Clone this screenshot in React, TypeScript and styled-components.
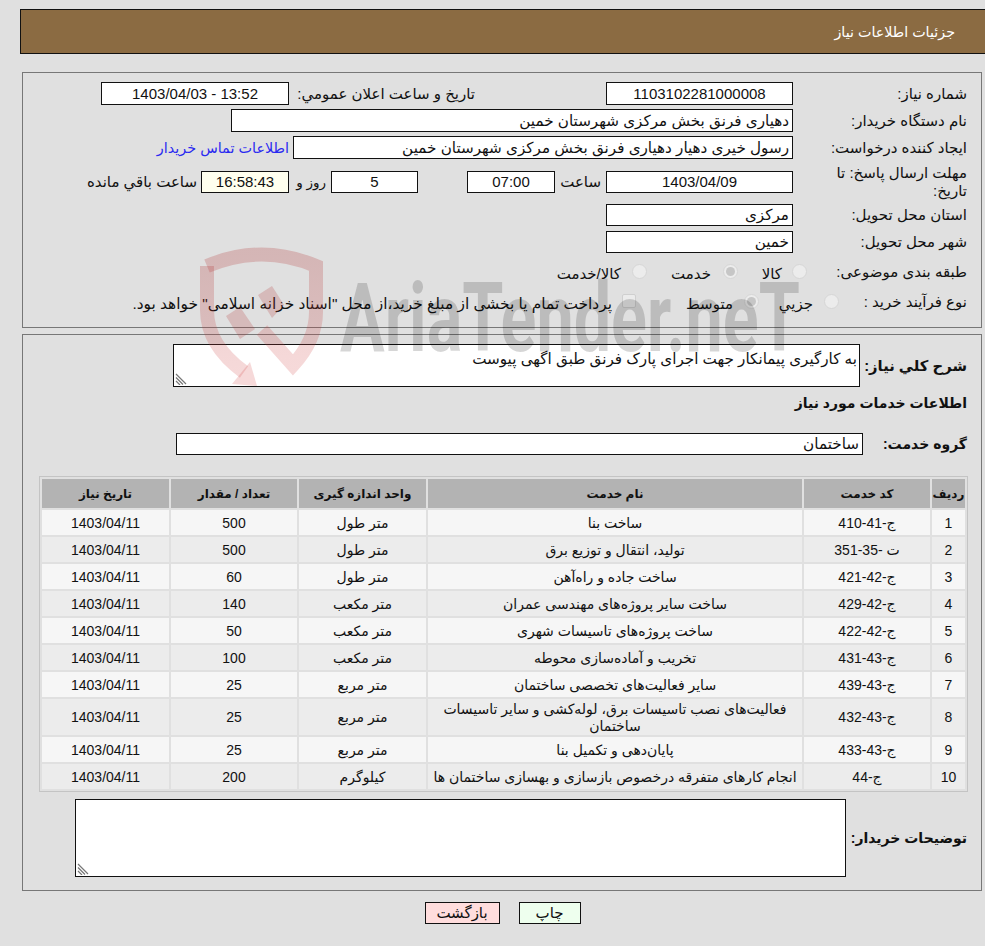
import React from 'react';
import styled, { createGlobalStyle } from 'styled-components';

const Global = createGlobalStyle`
  html, body { margin: 0; padding: 0; background: #e0e0e0; }
  body { font-family: "Liberation Sans", "DejaVu Sans", sans-serif; color: #111; }
`;
const Page = styled.div`
  position: relative; width: 985px; height: 946px; box-sizing: border-box; overflow: hidden;
  padding: 9px 0 0 20px; direction: rtl; font-size: 15px;
`;
const Header = styled.div`
  height: 45px; box-sizing: border-box; background: #8b6b42; border: 1px solid #111; border-right: 0; color: #fff;
  display: flex; align-items: center; padding: 0 30px 0 0; font-size: 14.3px; margin-bottom: 18px;
`;
const Panel = styled.div`
  border: 1px solid #777; margin: 0 3px 0 2px; box-sizing: border-box; display: flex; flex-direction: column;
`;
const TopPanel = styled(Panel)`height: 256px; padding: 7px 14px 0 0; margin-bottom: 6px;`;
const BottomPanel = styled(Panel)`height: 557px; padding: 9px 14px 0 0;`;
const Row = styled.div<{ $h: number; $mt?: number }>`
  display: flex; align-items: center; height: ${p => p.$h}px; margin-top: ${p => p.$mt ?? 0}px; flex: none;
`;
const Label = styled.div`width: 174px; flex: none; line-height: 18px; padding-left: 30px; box-sizing: border-box;`;
const Field = styled.div<{ $w: number; $bg?: string; $center?: boolean; $h?: number; $mr?: number }>`
  width: ${p => p.$w}px; height: ${p => p.$h ?? 23}px; box-sizing: border-box; border: 1px solid #111; background: ${p => p.$bg ?? '#fff'};
  display: flex; align-items: center; flex: none; padding: 0 3px; overflow: hidden; white-space: nowrap;
  margin-right: ${p => p.$mr ?? 0}px; font-size: ${p => p.$center ? 15 : 15.2}px;
  justify-content: ${p => p.$center ? 'center' : 'flex-start'};
`;
const Text = styled.span<{ $mr?: number; $w?: number; $color?: string; $size?: number; $pt?: number }>`
  display: inline-block; flex: none; box-sizing: border-box;
  padding-right: ${p => p.$mr ?? 0}px; padding-top: ${p => p.$pt ?? 0}px; ${p => p.$w ? `width: ${p.$w}px;` : ''}
  color: ${p => p.$color ?? 'inherit'}; white-space: nowrap; font-size: ${p => p.$size ?? 15}px;
`;
const Radio = styled.span<{ $on?: boolean; $mr: number }>`
  width: 15px; height: 15px; border-radius: 50%; background: #ececec; border: 1px solid #d6d6d6; box-sizing: border-box; flex: none;
  display: inline-flex; align-items: center; justify-content: center; margin-right: ${p => p.$mr}px; margin-left: -1px; margin-top: -2px;
  &::after { content: ''; width: 9px; height: 9px; border-radius: 50%; background: ${p => p.$on ? '#c6c6c6' : 'transparent'}; }
`;
const Check = styled.span<{ $mr: number }>`
  width: 14px; height: 14px; border-radius: 2px; background: #ebebeb; border: 1px solid #cfcfcf; box-sizing: border-box; flex: none;
  margin-right: ${p => p.$mr}px; margin-top: -2px;
`;
const BoldLabel = styled.div<{ $w?: number; $size?: number }>`
  font-weight: 700; font-size: ${p => p.$size ?? 14}px; flex: none; white-space: nowrap; ${p => p.$w ? `width: ${p.$w}px;` : ''}
`;
const Area = styled.div<{ $w: number; $h: number }>`
  position: relative; width: ${p => p.$w}px; height: ${p => p.$h}px; box-sizing: border-box; border: 1px solid #111; background: #fff; flex: none; padding: 5px 2px;
  white-space: nowrap; font-size: 15.2px; line-height: 17px;
`;
const Grip = styled.svg`position: absolute; left: 1px; bottom: 1px;`;
const TableWrap = styled.div`margin: 21px -1px 0 0; width: 929px; box-sizing: border-box; border: 1px solid #c4c4c4; flex: none;`;
const T = styled.table`width: 927px; border-collapse: separate; border-spacing: 2px; table-layout: fixed; font-size: 14px;`;
const Th = styled.th<{ $w: number }>`background: #b3b3b3; height: 29px; padding: 0; font-size: 12px; font-weight: 700; width: ${p => p.$w}px;`;
const Td = styled.td<{ $odd: boolean; $h: number }>`
  background: ${p => p.$odd ? '#f6f6f6' : '#ececec'}; text-align: center; padding: 1px 5px 0; height: ${p => p.$h - 1}px; line-height: 17px; font-size: 14px;
`;
const Buttons = styled.div`display: flex; justify-content: center; gap: 19px; margin-top: 11px;`;
const Btn = styled.div<{ $bg: string; $w: number }>`
  width: ${p => p.$w}px; height: 22px; box-sizing: border-box; border: 1px solid #111; background: ${p => p.$bg};
  display: flex; align-items: center; justify-content: center; font-size: 15px;
`;
const Mark = styled.svg`position: absolute; left: 0; top: 0; pointer-events: none;`;
const MarkText = styled.text`font-family: Roboto, "Liberation Sans", sans-serif; font-weight: 700; font-size: 96px; fill: #000; fill-opacity: 0.16; direction: ltr;`;

const rows: [string, string, string, string, string, string][] = [
  ['1', 'ج-41-410', 'ساخت بنا', 'متر طول', '500', '1403/04/11'],
  ['2', 'ت -35-351', 'تولید، انتقال و توزیع برق', 'متر طول', '500', '1403/04/11'],
  ['3', 'ج-42-421', 'ساخت جاده و راه‌آهن', 'متر طول', '60', '1403/04/11'],
  ['4', 'ج-42-429', 'ساخت سایر پروژه‌های مهندسی عمران', 'متر مکعب', '140', '1403/04/11'],
  ['5', 'ج-42-422', 'ساخت پروژه‌های تاسیسات شهری', 'متر مکعب', '50', '1403/04/11'],
  ['6', 'ج-43-431', 'تخریب و آماده‌سازی محوطه', 'متر مکعب', '100', '1403/04/11'],
  ['7', 'ج-43-439', 'سایر فعالیت‌های تخصصی ساختمان', 'متر مربع', '25', '1403/04/11'],
  ['8', 'ج-43-432', 'فعالیت‌های نصب تاسیسات برق، لوله‌کشی و سایر تاسیسات ساختمان', 'متر مربع', '25', '1403/04/11'],
  ['9', 'ج-43-433', 'پایان‌دهی و تکمیل بنا', 'متر مربع', '25', '1403/04/11'],
  ['10', 'ج-44', 'انجام کارهای متفرقه درخصوص بازسازی و بهسازی ساختمان ها', 'کیلوگرم', '200', '1403/04/11'],
];

const GripIcon = () => (
  <Grip width="12" height="12" viewBox="0 0 12 12">
    <path d="M1 1l10 10M1 4.5l7 7M1 8l4 4" stroke="#777" strokeWidth="1.2" fill="none" />
  </Grip>
);

export default function App() {
  return (
    <Page>
      <Global />
      <Header>جزئیات اطلاعات نیاز</Header>
      <TopPanel>
        <Row $h={27}>
          <Label>شماره نیاز:</Label>
          <Field $w={187} $center>1103102281000008</Field>
          <Text $mr={131} $w={317}>تاریخ و ساعت اعلان عمومي:</Text>
          <Field $w={188} $center>13:52 - 1403/04/03</Field>
        </Row>
        <Row $h={27}>
          <Label>نام دستگاه خریدار:</Label>
          <Field $w={562}>دهیاری فرنق بخش مرکزی شهرستان خمین</Field>
        </Row>
        <Row $h={27}>
          <Label>ایجاد کننده درخواست:</Label>
          <Field $w={500}>رسول خیری دهیار دهیاری فرنق بخش مرکزی شهرستان خمین</Field>
          <Text $mr={4} $color="#2a2af0" $size={14.4}>اطلاعات تماس خریدار</Text>
        </Row>
        <Row $h={41}>
          <Label>مهلت ارسال پاسخ: تا تاریخ:</Label>
          <Field $w={187} $h={22} $center>1403/04/09</Field>
          <Text $mr={5} $w={51}>ساعت</Text>
          <Field $w={88} $h={22} $center>07:00</Field>
          <Field $w={87} $h={22} $center $mr={49}>5</Field>
          <Text $mr={5} $w={42} $size={13.5}>روز و</Text>
          <Field $w={88} $h={22} $center $bg="#ffffee">16:58:43</Field>
          <Text $mr={4}>ساعت باقي مانده</Text>
        </Row>
        <Row $h={26}>
          <Label>استان محل تحویل:</Label>
          <Field $w={187} $h={22}>مرکزی</Field>
        </Row>
        <Row $h={28}>
          <Label>شهر محل تحویل:</Label>
          <Field $w={187} $h={22}>خمین</Field>
        </Row>
        <Row $h={32}>
          <Label>طبقه بندی موضوعی:</Label>
          <Radio $mr={-14} />
          <Text $mr={11} $w={55} $pt={4}>کالا</Text>
          <Radio $on $mr={0} />
          <Text $mr={13} $w={77} $pt={4}>خدمت</Text>
          <Radio $mr={0} />
          <Text $mr={12} $pt={4}>کالا/خدمت</Text>
        </Row>
        <Row $h={28}>
          <Label>نوع فرآیند خرید :</Label>
          <Radio $mr={-46} />
          <Text $mr={12} $w={66} $pt={4}>جزيي</Text>
          <Radio $on $mr={0} />
          <Text $mr={12} $w={109} $pt={4}>متوسط</Text>
          <Check $mr={0} />
          <Text $mr={10} $size={15.4} $pt={4}>پرداخت تمام یا بخشی از مبلغ خرید،از محل "اسناد خزانه اسلامی" خواهد بود.</Text>
        </Row>
      </TopPanel>
      <BottomPanel>
        <Row $h={43}>
          <BoldLabel $w={107} $size={14.8}>شرح کلي نیاز:</BoldLabel>
          <Area $w={687} $h={43}>به کارگیری پیمانکار جهت اجرای پارک فرنق طبق اگهی پیوست<GripIcon /></Area>
        </Row>
        <Row $h={32}><BoldLabel>اطلاعات خدمات مورد نیاز</BoldLabel></Row>
        <Row $h={22} $mt={14}>
          <BoldLabel $w={104}>گروه خدمت:</BoldLabel>
          <Field $w={687} $h={22}>ساختمان</Field>
        </Row>
        <TableWrap>
          <T>
            <thead>
              <tr>
                <Th $w={33}>رديف</Th><Th $w={126}>کد خدمت</Th><Th $w={374}>نام خدمت</Th><Th $w={127}>واحد اندازه گیری</Th><Th $w={126}>تعداد / مقدار</Th><Th $w={127}>تاریخ نیاز</Th>
              </tr>
            </thead>
            <tbody>
              {rows.map((r, i) => (
                <tr key={r[0]}>
                  {r.map((c, j) => <Td key={j} $odd={i % 2 === 0} $h={i === 7 ? 36 : 25}>{c}</Td>)}
                </tr>
              ))}
            </tbody>
          </T>
        </TableWrap>
        <Row $h={78} $mt={7}>
          <BoldLabel $w={121}>توضیحات خریدار:</BoldLabel>
          <Area $w={771} $h={78}><GripIcon /></Area>
        </Row>
      </BottomPanel>
      <Buttons>
        <Btn $bg="#eeffee" $w={62}>چاپ</Btn>
        <Btn $bg="#ffdddd" $w={75}>بازگشت</Btn>
      </Buttons>
      <Mark width="985" height="946" viewBox="0 0 985 946">
        <defs>
          <linearGradient id="shield" x1="0" y1="0" x2="0" y2="1">
            <stop offset="0" stopColor="#b03030" stopOpacity="0.24" />
            <stop offset="1" stopColor="#d04040" stopOpacity="0.2" />
          </linearGradient>
        </defs>
        <g fill="none" stroke="url(#shield)" strokeWidth="14">
          <path d="M207 266 Q262 243 316 266 V312 Q316 340 293 365 L262 330" />
          <path d="M207 266 V310 Q207 345 244 372" />
        </g>
        <polygon points="250,362 257,386 232,384" fill="#d04040" fillOpacity="0.2" />
        <polygon points="226,316 240,339 255,329 240,307" fill="#b03030" fillOpacity="0.22" />
        <polygon points="258,295 272,286 284,305 272,318" fill="#b03030" fillOpacity="0.22" />
        <MarkText x="340" y="351" textLength="460" lengthAdjust="spacingAndGlyphs" direction="ltr">AriaTender.neT</MarkText>
      </Mark>
    </Page>
  );
}
